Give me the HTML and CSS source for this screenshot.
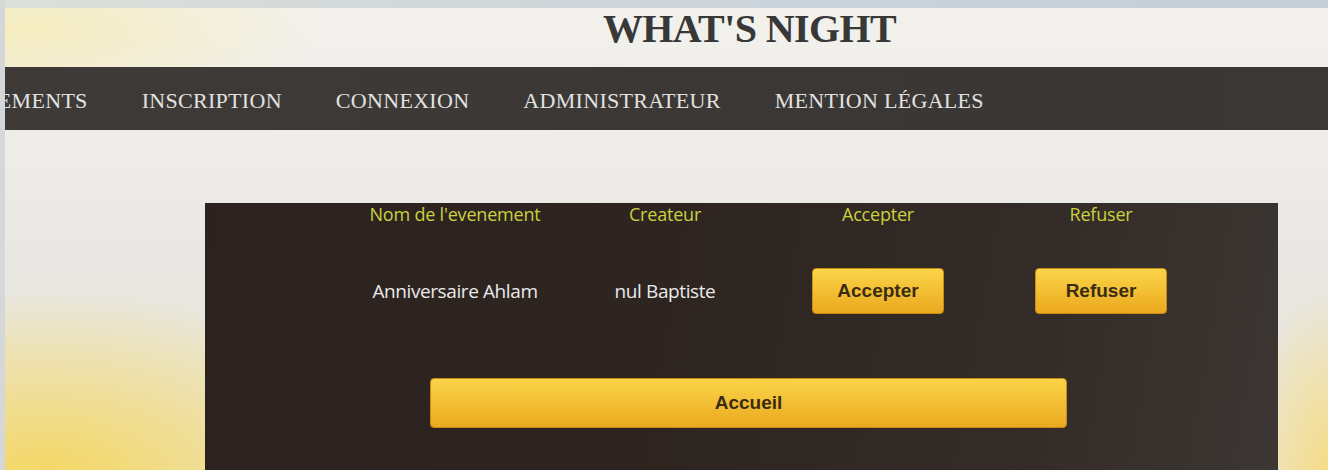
FILE: index.html
```html
<!DOCTYPE html>
<html lang="fr">
<head>
<meta charset="utf-8">
<title>What's Night</title>
<link rel="stylesheet" href="styles.css">
</head>
<body>
<div class="screen">
  <div class="topstrip"></div>
  <header class="brand"><h1 class="brand-title">WHAT'S NIGHT</h1></header>
  <nav class="nav">
    <ul class="nav-list">
      <li class="nav-item">ÉVÉNEMENTS</li>
      <li class="nav-item">INSCRIPTION</li>
      <li class="nav-item">CONNEXION</li>
      <li class="nav-item">ADMINISTRATEUR</li>
      <li class="nav-item">MENTION LÉGALES</li>
    </ul>
  </nav>
  <main class="content">
    <section class="panel">
      <div class="table">
        <div class="th">Nom de l'evenement</div>
        <div class="th">Createur</div>
        <div class="th">Accepter</div>
        <div class="th">Refuser</div>
        <div class="td">Anniversaire Ahlam</div>
        <div class="td">nul Baptiste</div>
        <div class="td"><button class="btn btn-small">Accepter</button></div>
        <div class="td"><button class="btn btn-small">Refuser</button></div>
      </div>
      <div class="home-row"><button class="btn btn-wide">Accueil</button></div>
    </section>
  </main>
</div>
</body>
</html>
```
FILE: styles.css
```css
* { box-sizing: border-box; }
html, body { margin: 0; padding: 0; }
body {
  width: 1328px;
  height: 470px;
  overflow: hidden;
  background: #e4e4e2;
}
.screen {
  width: 1328px;
  height: 470px;
  border-left: 5px solid #d6d7d8;
  background:
    radial-gradient(ellipse 360px 190px at 40px 480px, rgba(245,214,92,0.95), rgba(245,214,92,0) 100%),
    radial-gradient(ellipse 90px 190px at 1328px 480px, rgba(247,218,120,0.9), rgba(247,218,120,0) 100%),
    radial-gradient(ellipse 300px 90px at 20px 30px, rgba(246,236,186,0.9), rgba(246,236,186,0) 100%),
    linear-gradient(180deg, #f2f1ec 0%, #eeede9 30%, #e8e7e3 55%, #ebe6d2 100%);
  display: flex;
  flex-direction: column;
}
.topstrip {
  height: 8px;
  background: linear-gradient(90deg, #dcdfda, #cad3da 60%, #c4ced8);
}
.brand {
  height: 59px;
  display: flex;
  justify-content: center;
  padding-left: 166px;
}
.brand-title {
  margin: 0;
  padding-top: 0;
  font-family: "Liberation Serif", "Times New Roman", serif;
  font-weight: bold;
  font-size: 40px;
  line-height: 42px;
  color: #383838;
  letter-spacing: -0.6px;
}
.nav {
  height: 63px;
  background: linear-gradient(90deg, #3d3a38 0%, #3a3735 60%, #393837 100%);
  overflow: hidden;
  display: flex;
  align-items: center;
}
.nav-list {
  list-style: none;
  margin: 0 0 0 -67px;
  padding: 4px 0 0 0;
  display: flex;
  gap: 54px;
  white-space: nowrap;
}
.nav-item {
  font-family: "Liberation Serif", "Times New Roman", serif;
  font-size: 22px;
  color: #e2e2e0;
  letter-spacing: 0.3px;
}
.content {
  flex: 1;
  padding: 73px 0 0 200px;
}
.panel {
  width: 1073px;
  height: 267px;
  background: linear-gradient(100deg, #2c2320 0%, #2e2521 45%, #342c28 78%, #3c3734 100%);
  padding: 0 0 0 145px;
}
.table {
  display: grid;
  grid-template-columns: 210px 210px 216px 230px;
  grid-template-rows: 22px 46px;
  row-gap: 43px;
  align-items: center;
  justify-items: center;
}
.th {
  font-family: "Open Sans", "DejaVu Sans", sans-serif;
  font-size: 18px;
  line-height: 22px;
  color: #cbd03e;
  letter-spacing: -0.2px;
}
.td {
  font-family: "Open Sans", "DejaVu Sans", sans-serif;
  font-size: 19px;
  line-height: 24px;
  color: #eaeaea;
  letter-spacing: -0.4px;
}
.btn {
  font-family: "Liberation Sans", Arial, sans-serif;
  font-weight: bold;
  color: #3a2c14;
  background: linear-gradient(180deg, #fad449 0%, #f3bf33 50%, #eba81f 100%);
  border: 1px solid #c98c14;
  border-radius: 4px;
  padding: 0;
}
.btn-small {
  width: 132px;
  height: 46px;
  font-size: 19px;
}
.home-row {
  padding: 64px 0 0 80px;
}
.btn-wide {
  width: 637px;
  height: 50px;
  font-size: 19px;
}
```
